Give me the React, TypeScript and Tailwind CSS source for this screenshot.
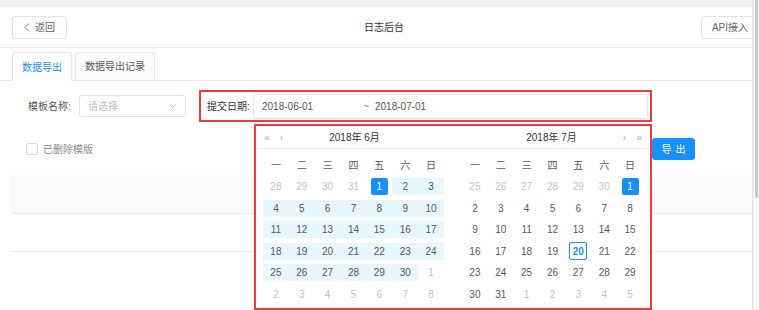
type Cell = { d: number; muted?: boolean; range?: boolean; sel?: boolean; today?: boolean };

const WEEK = ["一", "二", "三", "四", "五", "六", "日"];

function buildMonth(offset: number, prevDays: number, days: number, opts: { range?: boolean; today?: number }) {
  const cells: Cell[] = [];
  for (let i = 0; i < 42; i++) {
    const day = i - offset + 1;
    if (day < 1) cells.push({ d: day + prevDays, muted: true });
    else if (day > days) cells.push({ d: day - days, muted: true });
    else
      cells.push({
        d: day,
        sel: day === 1,
        range: opts.range && day > 1,
        today: opts.today === day,
      });
  }
  return cells;
}

const june = buildMonth(4, 31, 30, { range: true });
const july = buildMonth(6, 30, 31, { today: 20 });

function DayCell({ c }: { c: Cell }) {
  return (
    <div className="h-[21.5px] flex items-center justify-center">
      <div className={`h-[17px] w-full flex items-center justify-center ${c.range ? "bg-[#e6f7ff]" : ""}`}>
        {c.sel ? (
          <span className="w-[17px] h-[17px] rounded-[2px] bg-[#1890ff] text-white flex items-center justify-center">
            {c.d}
          </span>
        ) : c.today ? (
          <span className="w-[18px] h-[18px] rounded-[2px] border border-[#1890ff] text-[#1890ff] font-bold flex items-center justify-center">
            {c.d}
          </span>
        ) : (
          <span className={c.muted ? "text-[#c4c4c4]" : "text-[#595959]"}>{c.d}</span>
        )}
      </div>
    </div>
  );
}

function Panel({ title, cells, side }: { title: string; cells: Cell[]; side: "left" | "right" }) {
  return (
    <div className="flex-1 flex flex-col">
      <div className="relative h-[23px] border-b border-[#ececec] flex items-center justify-center text-[#333]">
        {side === "left" ? (
          <>
            <span className="absolute left-[8px] text-[#aaa]">«</span>
            <span className="absolute left-[24px] text-[#aaa]">‹</span>
          </>
        ) : (
          <>
            <span className="absolute right-[24px] text-[#aaa]">›</span>
            <span className="absolute right-[8px] text-[#aaa]">»</span>
          </>
        )}
        {title}
      </div>
      <div className={side === "left" ? "pl-[7px] pt-[5px]" : "pl-[9px] pt-[5px]"}>
        <div className="w-[181px] grid grid-cols-7">
          {WEEK.map((w) => (
            <div key={w} className="h-[22px] flex items-center justify-center text-[#595959]">
              {w}
            </div>
          ))}
          {cells.map((c, i) => (
            <DayCell key={i} c={c} />
          ))}
        </div>
      </div>
    </div>
  );
}

export default function App() {
  return (
    <div className="w-[759px] h-[310px] overflow-hidden flex bg-white text-[10px] font-['Liberation_Sans','Noto_Sans_CJK_SC',sans-serif]">
      <div className="w-[752px] relative flex flex-col overflow-hidden">
        <div className="h-[7px] bg-[#f0f2f5]" />

        {/* header */}
        <div className="h-[41px] border-b border-[#ececec] flex items-center pl-[12px] mr-[-7px]">
          <button className="w-[55px] h-[23px] border border-[#e3e3e3] rounded-[3px] flex items-center justify-center gap-[5px] text-[#666]">
            <svg width="6" height="9" viewBox="0 0 6 9" fill="none" stroke="#777" strokeWidth="1">
              <polyline points="5,0.5 1,4.5 5,8.5" />
            </svg>
            返回
          </button>
          <div className="flex-1 text-center text-[#333]">日志后台</div>
          <button className="w-[58px] shrink-0 h-[23px] border border-[#e3e3e3] rounded-[3px] text-[#666] flex items-center justify-center">
            API接入
          </button>
        </div>

        {/* tabs */}
        <div className="pt-[4px] pl-[12px] flex gap-[3px] border-b border-[#e8e8e8]">
          <div className="w-[60px] border border-b-0 border-[#e8e8e8] rounded-t-[3px] bg-white flex items-center justify-center text-[#1890ff] mb-[-1px] h-[29px]">
            数据导出
          </div>
          <div className="w-[80px] h-[28px] border border-b-0 border-[#e8e8e8] rounded-t-[3px] bg-[#fafafa] flex items-center justify-center text-[#595959]">
            数据导出记录
          </div>
        </div>

        {/* form row */}
        <div className="mt-[9px] flex items-center pl-[28px]">
          <span className="w-[45px] text-[#595959]">模板名称:</span>
          <div className="ml-[6px] w-[107px] h-[22px] border border-[#e3e3e3] rounded-[3px] flex items-center justify-between pl-[8px] pr-[9px] text-[#bfbfbf]">
            请选择
            <svg width="7" height="4" viewBox="0 0 7 4" fill="none" stroke="#bbb" strokeWidth="0.9">
              <polyline points="0.3,0.3 3.5,3.5 6.7,0.3" />
            </svg>
          </div>
          <div className="ml-[13px] w-[453px] h-[32px] border-2 border-[#f23a3a] flex items-center pl-[6px] pr-[2px]">
            <span className="text-[#333] w-[46px]">提交日期:</span>
            <div className="flex-1 h-[25px] border border-[#e6e6e6] rounded-[3px] flex items-center pl-[8px] text-[#595959]">
              <span className="w-[101px]">2018-06-01</span>
              <span className="w-[12px] text-[#888]">~</span>
              <span>2018-07-01</span>
            </div>
          </div>
        </div>

        {/* checkbox + export */}
        <div className="mt-[16px] h-[22px] flex items-center pl-[26px]">
          <span className="w-[12px] h-[12px] border border-[#d9d9d9] rounded-[2px] bg-white" />
          <span className="ml-[5px] text-[#8c8c8c]">已删除模版</span>
          <button className="ml-auto mr-[57px] w-[43px] h-[22px] rounded-[3px] bg-[#1890ff] text-white tracking-[4px] pl-[4px]">
            导出
          </button>
        </div>

        {/* table */}
        <div className="mt-[15px] ml-[11px]">
          <div className="h-[39px] bg-[#fafafa] border-b border-[#ececec]" />
          <div className="h-[38px] border-b border-[#ececec]" />
        </div>

        {/* date range popup */}
        <div className="absolute left-[254px] top-[124px] w-[398px] h-[186px] border-2 border-[#f23a3a] bg-white flex">
          <Panel title="2018年 6月" cells={june} side="left" />
          <Panel title="2018年 7月" cells={july} side="right" />
        </div>
      </div>

      {/* scrollbar */}
      <div className="w-[7px] bg-[#f7f7f7] border-l border-[#e2e2e2] flex justify-center">
        <div className="w-[3px] h-[198px] bg-[#cacaca] rounded-b-[2px]" />
      </div>
    </div>
  );
}
